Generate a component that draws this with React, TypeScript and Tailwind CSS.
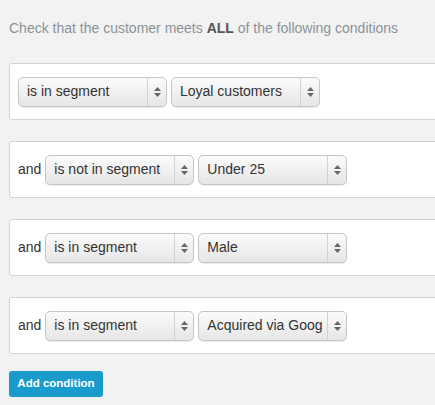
const rows = [
  { lead: "", op: "is in segment", seg: "Loyal customers" },
  { lead: "and", op: "is not in segment", seg: "Under 25" },
  { lead: "and", op: "is in segment", seg: "Male" },
  { lead: "and", op: "is in segment", seg: "Acquired via Goog" },
];

function Select({ value }: { value: string }) {
  return (
    <div className="flex h-[30px] w-[149px] shrink-0 items-stretch overflow-hidden rounded-[5px] border border-[#c6c6c6] bg-gradient-to-b from-[#fbfbfb] to-[#e6e6e6] shadow-[0_1px_1px_rgba(0,0,0,0.08)]">
      <div className="flex min-w-0 flex-1 items-center whitespace-nowrap pl-[8px] text-[14px] text-[#333]">
        {value}
      </div>
      <div className="flex w-[19px] shrink-0 flex-col items-center justify-center gap-[2px] border-l border-[#d2d2d2]">
        <svg width="7" height="4" viewBox="0 0 7 4">
          <path d="M3.5 0 L7 4 L0 4 Z" fill="#666" />
        </svg>
        <svg width="7" height="4" viewBox="0 0 7 4">
          <path d="M0 0 L7 0 L3.5 4 Z" fill="#666" />
        </svg>
      </div>
    </div>
  );
}

export default function App() {
  return (
    <div className="h-[405px] w-[435px] overflow-hidden bg-[#f2f2f2] pl-[9px] pt-[20px] font-['Liberation_Sans',Arial,sans-serif]">
      <p className="h-[17px] text-[14px] leading-[17px] text-[#8a9498]">
        Check that the customer meets <b className="text-[#555]">ALL</b> of the following conditions
      </p>
      <div className="mt-[26px] flex flex-col gap-[21px]">
        {rows.map((r, i) => (
          <div
            key={i}
            className="flex h-[57px] w-[460px] items-center gap-[4px] rounded-[3px] border border-[#d3d3d3] bg-white pl-[8px]"
          >
            {r.lead && <span className="text-[14px] text-[#333]">{r.lead}</span>}
            <Select value={r.op} />
            <Select value={r.seg} />
          </div>
        ))}
      </div>
      <button className="mt-[17px] h-[26px] w-[94px] rounded-[3px] bg-[#1a9bcd] text-[11.5px] font-bold text-white">
        Add condition
      </button>
    </div>
  );
}
